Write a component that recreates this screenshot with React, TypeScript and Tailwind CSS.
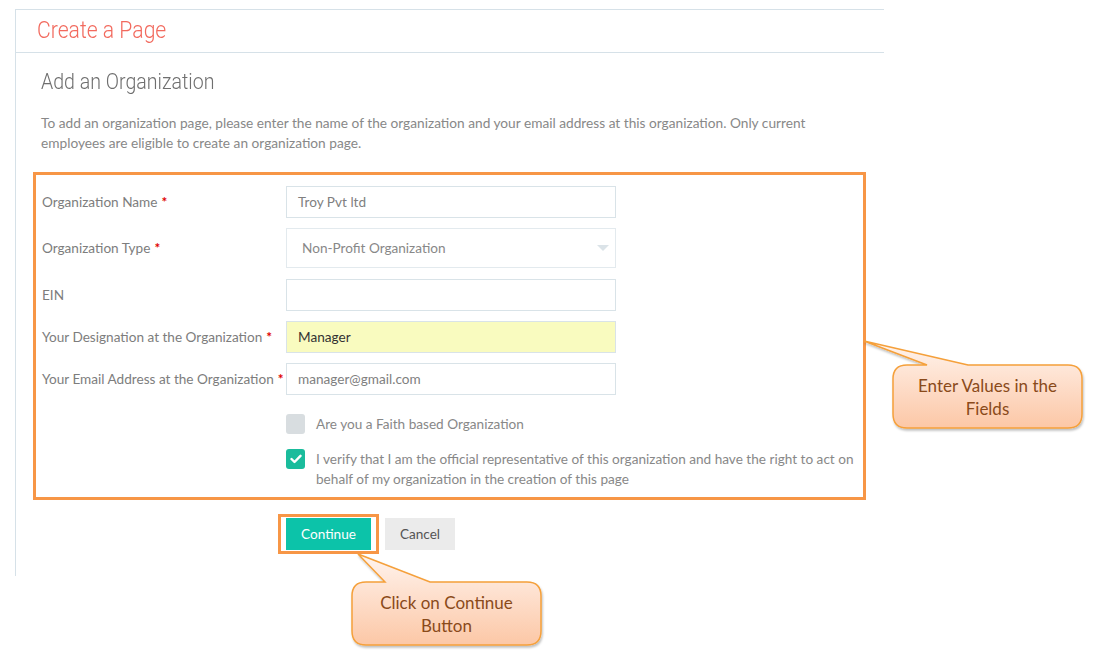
import React from "react";

const body = { fontFamily: "Lato, 'Open Sans', sans-serif" };
const thin = { fontFamily: "Roboto, 'Liberation Sans', sans-serif" };

function Label({ text, req }: { text: string; req?: boolean }) {
  return (
    <div className="w-[244px] shrink-0 text-[13.6px] text-[#7d7d7d]" style={body}>
      {text}
      {req && <span className="ml-1 text-[#e00000] font-bold">*</span>}
    </div>
  );
}

function Row({ label, req, children }: { label: string; req?: boolean; children: React.ReactNode }) {
  return (
    <div className="flex items-center">
      <Label text={label} req={req} />
      {children}
    </div>
  );
}

function Input({ value, bg, dark }: { value: string; bg?: string; dark?: boolean }) {
  return (
    <div
      className={`w-[330px] h-[32px] border border-[#d9e3e8] flex items-center px-[11px] text-[13.6px] ${bg ?? "bg-white"} ${dark ? "text-[#333]" : "text-[#808080]"}`}
      style={body}
    >
      {value}
    </div>
  );
}

export default function App() {
  return (
    <div className="relative w-[1108px] h-[667px] bg-white overflow-hidden">
      <div className="ml-[15px] mt-[9px] w-[869px] h-[567px] border-l border-t border-[#d6e1e8]">
        <div className="h-[43px] border-b border-[#d6e1e8] flex items-center pl-[21px]">
          <span className="inline-block origin-left scale-x-[0.92] text-[23px] font-light text-[#f26a5e]" style={thin}>
            Create a Page
          </span>
        </div>
        <div className="pl-[25px]">
          <div className="mt-[15px] origin-left scale-x-[0.89] text-[22px] font-light text-[#6f6f6f] leading-[28px]" style={thin}>
            Add an Organization
          </div>
          <p className="mt-[17px] w-[800px] text-[13.7px] leading-[20px] text-[#888]" style={body}>
            To add an organization page, please enter the name of the organization and your email address at this organization. Only current employees are eligible to create an organization page.
          </p>
          <div className="ml-[-8px] mt-[19px] w-[833px] h-[328px] border-[3px] border-[#f79646] pl-[6px] pt-[11px]">
            <div className="flex flex-col gap-[10px]">
              <Row label="Organization Name" req>
                <Input value="Troy Pvt ltd" />
              </Row>
              <Row label="Organization Type" req>
                <div className="w-[330px] h-[40px] border border-[#e3eaee] flex items-center justify-between pl-[15px] pr-[6px] text-[13.6px] text-[#888]" style={body}>
                  <span>Non-Profit Organization</span>
                  <svg width="12" height="7" viewBox="0 0 12 7">
                    <path d="M0 0 L12 0 L6 6 Z" fill="#dbe3e8" />
                  </svg>
                </div>
              </Row>
              <div className="mt-px">
                <Row label="EIN">
                  <Input value="" />
                </Row>
              </div>
              <Row label="Your Designation at the Organization" req>
                <Input value="Manager" bg="bg-[#f9fbbf]" dark />
              </Row>
              <Row label="Your Email Address at the Organization" req>
                <Input value="manager@gmail.com" />
              </Row>
            </div>
            <div className="ml-[244px] mt-[19px] flex flex-col gap-[15px] text-[13.6px] text-[#888]" style={body}>
              <div className="flex items-center gap-[11px]">
                <div className="w-[19px] h-[20px] rounded-[3px] bg-[#d8dde0]" />
                <span>Are you a Faith based Organization</span>
              </div>
              <div className="flex items-start gap-[11px]">
                <div className="w-[19px] h-[20px] rounded-[3px] bg-[#1abc9c] flex items-center justify-center shrink-0">
                  <svg width="12" height="10" viewBox="0 0 12 10">
                    <path d="M1.5 5 L4.5 8 L10.5 1.8" stroke="white" strokeWidth="2.4" fill="none" strokeLinecap="round" strokeLinejoin="round" />
                  </svg>
                </div>
                <span className="leading-[20px] w-[545px]">
                  I verify that I am the official representative of this organization and have the right to act on behalf of my organization in the creation of this page
                </span>
              </div>
            </div>
          </div>
          <div className="mt-[14px] ml-[237px] flex items-center gap-[6px]">
            <div className="border-[3px] border-[#f79646] px-[5px] py-px">
              <button className="w-[85px] h-[32px] bg-[#0cc3a9] text-white text-[13.6px]" style={body}>
                Continue
              </button>
            </div>
            <button className="w-[70px] h-[32px] bg-[#ebebeb] text-[#555] text-[13.6px]" style={body}>
              Cancel
            </button>
          </div>
        </div>
      </div>

      <svg className="absolute left-0 top-0 pointer-events-none" width="1108" height="667">
        <defs>
          <linearGradient id="cg" x1="0" y1="0" x2="0" y2="1">
            <stop offset="0" stopColor="#fff4ee" />
            <stop offset="1" stopColor="#fcc7a6" />
          </linearGradient>
          <filter id="sh" x="-10%" y="-10%" width="130%" height="140%">
            <feDropShadow dx="1" dy="2" stdDeviation="1.2" floodColor="#000" floodOpacity="0.25" />
          </filter>
        </defs>
        <path
          d="M907 365 L927 365 L864 341 L968 365 L1068 365 Q1082 365 1082 379 L1082 414 Q1082 428 1068 428 L907 428 Q893 428 893 414 L893 379 Q893 365 907 365 Z"
          fill="url(#cg)"
          stroke="#f5a03a"
          strokeWidth="1.5"
          filter="url(#sh)"
        />
        <path
          d="M366 582 L385 582 L358 554 L430 582 L527 582 Q541 582 541 596 L541 631 Q541 645 527 645 L366 645 Q352 645 352 631 L352 596 Q352 582 366 582 Z"
          fill="url(#cg)"
          stroke="#f5a03a"
          strokeWidth="1.5"
          filter="url(#sh)"
        />
      </svg>
      <div
        className="absolute left-[893px] top-[365px] w-[189px] h-[63px] flex items-center justify-center text-center text-[17px] leading-[23px] text-[#8a4a1a]"
        style={body}
      >
        Enter Values in the
        <br />
        Fields
      </div>
      <div
        className="absolute left-[352px] top-[582px] w-[189px] h-[63px] flex items-center justify-center text-center text-[17px] leading-[23px] text-[#8a4a1a]"
        style={body}
      >
        Click on Continue
        <br />
        Button
      </div>
    </div>
  );
}
